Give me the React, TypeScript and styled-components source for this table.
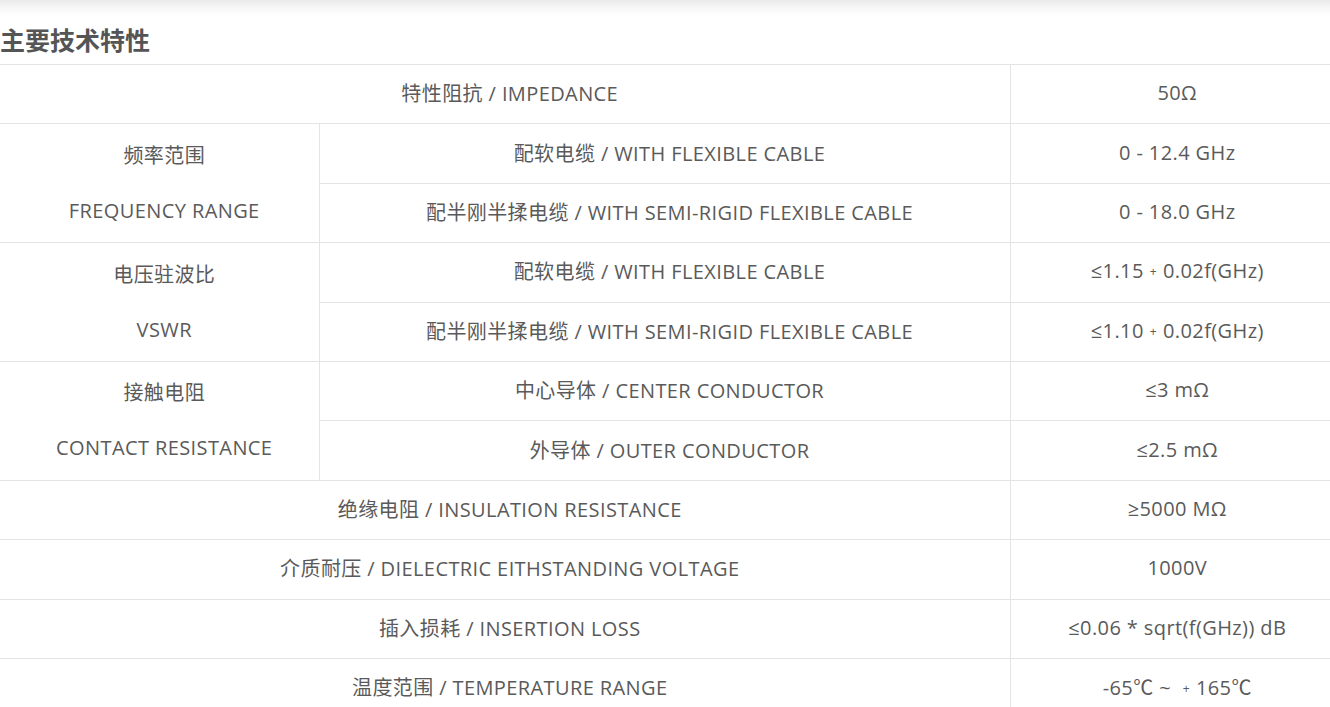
import React from "react";
import styled, { createGlobalStyle } from "styled-components";

const Global = createGlobalStyle`
  html, body { margin: 0; padding: 0; background: #fff; overflow: hidden; }
  body { font-family: "Open Sans", "Noto Sans CJK SC", sans-serif; }
`;

const Page = styled.div`
  width: 1330px;
  overflow: hidden;
`;

const ShadowBar = styled.div`
  height: 16px;
  background: linear-gradient(to bottom, #e9e9e9 0%, #f6f6f6 45%, #ffffff 100%);
`;

const Heading = styled.h2`
  margin: 0;
  height: 48px;
  line-height: 46px;
  font-size: 25px;
  font-weight: 700;
  color: #555;
  font-family: "Noto Sans CJK SC", sans-serif;
`;

const Table = styled.table`
  width: 1334px;
  border-collapse: collapse;
  table-layout: fixed;
  color: #5a5a5a;
  font-size: 20px;
  letter-spacing: 0.4px;
  font-family: "Open Sans", "Noto Sans CJK SC", sans-serif;
`;

const Row = styled.tr`
  height: 59.4px;
`;

const Cell = styled.td<{ $first?: boolean }>`
  border-top: 1px solid #e4e4e4;
  border-bottom: 1px solid #e4e4e4;
  border-left: ${(p) => (p.$first ? "none" : "1px solid #e4e4e4")};
  text-align: center;
  vertical-align: middle;
  padding: 0 0 3px 10px;
  white-space: nowrap;
`;

const Stack = styled.div`
  display: flex;
  flex-direction: column;
  gap: 28px;
  align-items: center;
`;

const Plus = styled.span`
  font-size: 12px;
  margin: 0 6px;
  position: relative;
  top: -2px;
`;

type Single = { kind: "single"; label: string; value: React.ReactNode };
type Group = {
  kind: "group";
  zh: string;
  en: string;
  items: { label: string; value: React.ReactNode }[];
};

const data: (Single | Group)[] = [
  { kind: "single", label: "特性阻抗 / IMPEDANCE", value: "50Ω" },
  {
    kind: "group",
    zh: "频率范围",
    en: "FREQUENCY RANGE",
    items: [
      { label: "配软电缆 / WITH FLEXIBLE CABLE", value: "0 - 12.4 GHz" },
      { label: "配半刚半揉电缆 / WITH SEMI-RIGID FLEXIBLE CABLE", value: "0 - 18.0 GHz" },
    ],
  },
  {
    kind: "group",
    zh: "电压驻波比",
    en: "VSWR",
    items: [
      { label: "配软电缆 / WITH FLEXIBLE CABLE", value: <>≤1.15<Plus>+</Plus>0.02f(GHz)</> },
      { label: "配半刚半揉电缆 / WITH SEMI-RIGID FLEXIBLE CABLE", value: <>≤1.10<Plus>+</Plus>0.02f(GHz)</> },
    ],
  },
  {
    kind: "group",
    zh: "接触电阻",
    en: "CONTACT RESISTANCE",
    items: [
      { label: "中心导体 / CENTER CONDUCTOR", value: "≤3 mΩ" },
      { label: "外导体 / OUTER CONDUCTOR", value: "≤2.5 mΩ" },
    ],
  },
  { kind: "single", label: "绝缘电阻 / INSULATION RESISTANCE", value: "≥5000 MΩ" },
  { kind: "single", label: "介质耐压 / DIELECTRIC EITHSTANDING VOLTAGE", value: "1000V" },
  { kind: "single", label: "插入损耗 / INSERTION LOSS", value: "≤0.06 * sqrt(f(GHz)) dB" },
  { kind: "single", label: "温度范围 / TEMPERATURE RANGE", value: <>-65℃ ~ <Plus>+</Plus>165℃</> },
];

export default function App() {
  return (
    <Page>
      <Global />
      <ShadowBar />
      <Heading>主要技术特性</Heading>
      <Table>
        <colgroup>
          <col style={{ width: 319 }} />
          <col style={{ width: 691 }} />
          <col style={{ width: 324 }} />
        </colgroup>
        <tbody>
          {data.map((d, i) =>
            d.kind === "single" ? (
              <Row key={i}>
                <Cell $first colSpan={2}>{d.label}</Cell>
                <Cell>{d.value}</Cell>
              </Row>
            ) : (
              d.items.map((it, j) => (
                <Row key={`${i}-${j}`}>
                  {j === 0 && (
                    <Cell $first rowSpan={d.items.length}>
                      <Stack>
                        <span>{d.zh}</span>
                        <span>{d.en}</span>
                      </Stack>
                    </Cell>
                  )}
                  <Cell>{it.label}</Cell>
                  <Cell>{it.value}</Cell>
                </Row>
              ))
            )
          )}
        </tbody>
      </Table>
    </Page>
  );
}
